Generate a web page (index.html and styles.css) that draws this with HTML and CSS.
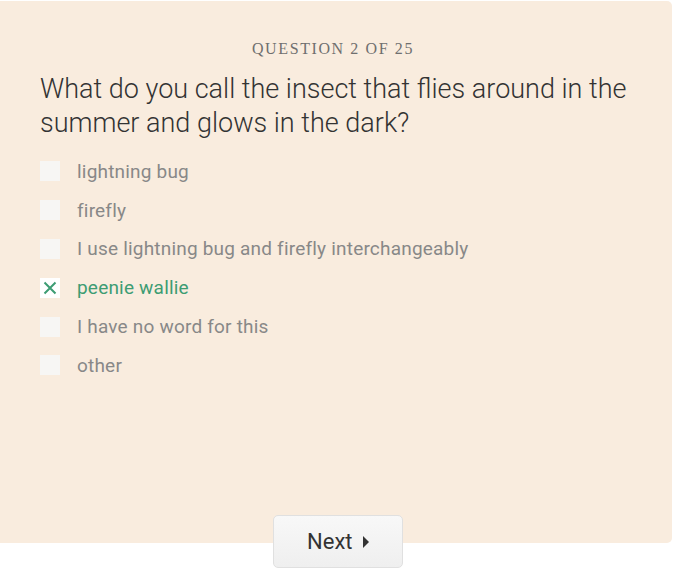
FILE: index.html
```html
<!DOCTYPE html>
<html>
<head>
    <title>Quiz</title>
    <link rel="stylesheet" href="styles.css">
</head>
<body>
    <div class="quiz">
        <div class="question-count">QUESTION 2 OF 25</div>
        <h2 class="question">What do you call the insect that flies around in the summer and glows in the dark?</h2>
        <ul class="answers">
            <li><span class="box"></span>lightning bug</li>
            <li><span class="box"></span>firefly</li>
            <li><span class="box"></span>I use lightning bug and firefly interchangeably</li>
            <li class="picked"><span class="box">
                <svg width="14" height="14" viewBox="0 0 14 14"><path d="M1.5 1.5 L12.5 12.5 M12.5 1.5 L1.5 12.5" stroke="#3d9c73" stroke-width="2" fill="none"/></svg>
            </span>peenie wallie</li>
            <li><span class="box"></span>I have no word for this</li>
            <li><span class="box"></span>other</li>
        </ul>
    </div>
    <div class="nav">
        <button class="next">Next <span class="arrow"></span></button>
    </div>
</body>
</html>
```

FILE: styles.css
```css
body {
    margin: 0;
    background: #fff;
    font-family: Roboto, 'Liberation Sans', Arial, sans-serif;
}

.quiz {
    margin-top: 1px;
    width: 672px;
    height: 542px;
    box-sizing: border-box;
    background-color: #f9ecde;
    border-radius: 0 5px 5px 0;
    padding: 39px 40px 0 40px;
}

.question-count {
    text-align: center;
    font-family: 'Liberation Serif', 'DejaVu Serif', serif;
    font-size: 16px;
    letter-spacing: 1.6px;
    color: #6f6f6f;
    margin-left: -6px;
}

.question {
    margin: 14px 0 0 0;
    font-size: 27px;
    font-weight: 300;
    line-height: 34px;
    color: #333;
}

.answers {
    list-style: none;
    margin: 12px 0 0 0;
    padding: 0;
}

.answers li {
    display: flex;
    align-items: center;
    height: 38.8px;
    font-size: 19px;
    letter-spacing: 0.2px;
    color: #888;
}

.box {
    width: 20px;
    height: 20px;
    background-color: #f7f6f4;
    margin-right: 17px;
    display: flex;
    align-items: center;
    justify-content: center;
}

.answers li.picked {
    color: #3d9c73;
}

.picked .box {
    background-color: #fff;
}

.nav {
    display: flex;
    justify-content: center;
    margin-top: -28px;
    padding-left: 2px;
}

.next {
    width: 130px;
    height: 53px;
    font-family: inherit;
    font-size: 22px;
    color: #333;
    border: 1px solid #e0e0e0;
    border-radius: 5px;
    background: linear-gradient(#f8f8f8, #efefef);
    cursor: pointer;
}

.arrow {
    display: inline-block;
    width: 0;
    height: 0;
    border-top: 6px solid transparent;
    border-bottom: 6px solid transparent;
    border-left: 6px solid #333;
    margin-left: 5px;
    vertical-align: 1px;
}
```
